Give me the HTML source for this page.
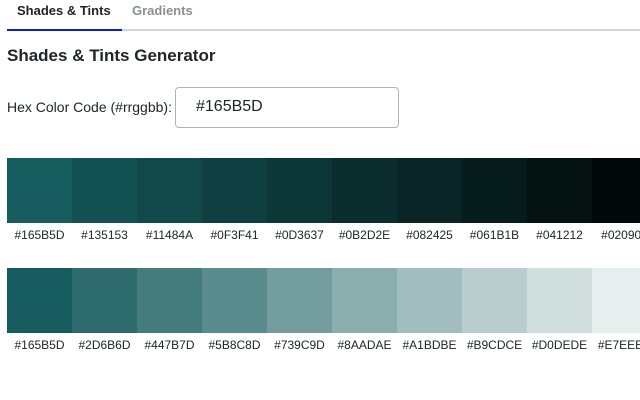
<!DOCTYPE html>
<html><head><style>
body{margin:0;width:640px;height:400px;overflow:hidden;background:#fff;font-family:"Liberation Sans",sans-serif;color:#212529;position:relative}
.a{position:absolute}
.row{position:absolute;left:7px;display:flex}
.row div{width:65px;height:65px;flex:none}
.lab{position:absolute;left:7px;display:flex;font-size:12px;color:#212529}
.lab span{width:65px;flex:none;text-align:center;white-space:nowrap;overflow:visible}
</style></head><body>
<div class="a" style="left:17px;top:3px;font-size:13px;font-weight:bold">Shades &amp; Tints</div>
<div class="a" style="left:132px;top:3px;font-size:13px;font-weight:bold;color:#8a8f94">Gradients</div>
<div class="a" style="left:7px;top:29px;width:633px;height:2px;background:#d5d5d5"></div>
<div class="a" style="left:7px;top:29px;width:115px;height:2px;background:#0a1fd8"></div>
<div class="a" style="left:7px;top:46px;font-size:17px;font-weight:bold">Shades &amp; Tints Generator</div>
<div class="a" style="left:7px;top:99px;font-size:14px">Hex Color Code (#rrggbb):</div>
<div class="a" style="left:175px;top:87px;width:222px;height:39px;border:1px solid #b0b4b8;border-radius:4px"></div>
<div class="a" style="left:196px;top:98px;font-size:16px">#165B5D</div>
<div class="row" style="top:158px">
<div style="background:#165B5D"></div><div style="background:#135153"></div><div style="background:#11484A"></div><div style="background:#0F3F41"></div><div style="background:#0D3637"></div><div style="background:#0B2D2E"></div><div style="background:#082425"></div><div style="background:#061B1B"></div><div style="background:#041212"></div><div style="background:#020909"></div></div>
<div class="lab" style="top:228px"><span>#165B5D</span><span>#135153</span><span>#11484A</span><span>#0F3F41</span><span>#0D3637</span><span>#0B2D2E</span><span>#082425</span><span>#061B1B</span><span>#041212</span><span>#020909</span></div>
<div class="row" style="top:268px">
<div style="background:#165B5D"></div><div style="background:#2D6B6D"></div><div style="background:#447B7D"></div><div style="background:#5B8C8D"></div><div style="background:#739C9D"></div><div style="background:#8AADAE"></div><div style="background:#A1BDBE"></div><div style="background:#B9CDCE"></div><div style="background:#D0DEDE"></div><div style="background:#E7EEEE"></div></div>
<div class="lab" style="top:338px"><span>#165B5D</span><span>#2D6B6D</span><span>#447B7D</span><span>#5B8C8D</span><span>#739C9D</span><span>#8AADAE</span><span>#A1BDBE</span><span>#B9CDCE</span><span>#D0DEDE</span><span>#E7EEEE</span></div>
</body></html>
